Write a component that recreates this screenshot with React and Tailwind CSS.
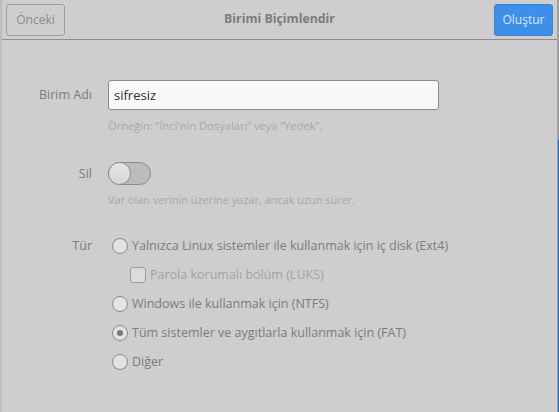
export default function App() {
  const font = { fontFamily: '"Open Sans", "Noto Sans", sans-serif' };
  const Radio = ({ checked }) => (
    <span className="w-[16px] h-[16px] rounded-full border border-[#8a8a8a] bg-[#e2e2e2] flex items-center justify-center shrink-0">
      {checked && <span className="w-[6px] h-[6px] rounded-full bg-[#7a7a7a]" />}
    </span>
  );
  return (
    <div className="w-[559px] h-[412px] bg-[#cecece] relative overflow-hidden text-[12.5px]" style={font}>
      <div className="absolute left-0 top-0 w-[2px] h-[412px] bg-[#bdbdbd]" />
      <div className="absolute right-0 top-0 w-[2px] h-[412px] bg-[#a0a0a0]" />
      <div className="absolute right-0 top-[140px] w-[1px] h-[272px] bg-[#2a6ab0]" />
      <div className="h-[40px] flex items-center justify-between px-[6px] border-b border-[#8f8f8f] rounded-tr-[6px]">
        <button className="w-[59px] h-[32px] rounded-[3px] border border-[#9d9d9d] text-[#8c8c8c] text-[12px]">Önceki</button>
        <div className="font-bold text-[#7c7c7c] text-[12.3px]">Birimi Biçimlendir</div>
        <button className="w-[59px] h-[32px] rounded-[3px] bg-[#3d8fea] border border-[#3a84d8] text-[#dce8f6] text-[12px]">Oluştur</button>
      </div>
      <div className="pt-[40px] grid grid-cols-[92px_1fr] gap-x-[16px]">
        <div className="text-right text-[#7c7c7c] h-[30px] leading-[30px]">Birim Adı</div>
        <div>
          <div className="w-[331px] h-[30px] rounded-[3px] border border-[#8a8a8a] bg-[#f8f8f8] text-[#2e2e2e] text-[13px] leading-[28px] pl-[5px]">sifresiz</div>
          <div className="mt-[8px] text-[11.1px] leading-[16px] text-[#a8a8a8]">Örneğin: “İnci'nin Dosyaları” veya “Yedek”.</div>
        </div>

        <div className="mt-[28px] text-right text-[#7c7c7c] h-[23px] leading-[23px]">Sil</div>
        <div className="mt-[28px]">
          <div className="w-[43px] h-[23px] rounded-full border border-[#8c8c8c] bg-[#bcbcbc] relative">
            <div className="absolute left-[-1px] top-[-1px] w-[23px] h-[23px] rounded-full border border-[#8c8c8c] bg-gradient-to-b from-[#e6e6e6] to-[#d6d6d6]" />
          </div>
          <div className="mt-[7px] text-[10.95px] leading-[16px] text-[#a8a8a8]">Var olan verinin üzerine yazar, ancak uzun sürer.</div>
        </div>

        <div className="mt-[28px] text-right text-[#7c7c7c] h-[20px] leading-[20px]">Tür</div>
        <div className="mt-[28px] flex flex-col gap-[9px] text-[#7c7c7c] pl-[4px]">
          <div className="flex items-center gap-[4px] h-[20px]"><Radio />Yalnızca Linux sistemler ile kullanmak için iç disk (Ext4)</div>
          <div className="flex items-center gap-[4px] h-[20px] pl-[18px] text-[#a3a3a3]">
            <span className="w-[16px] h-[16px] rounded-[3px] border border-[#9a9a9a] bg-[#dcdcdc] shrink-0" />
            Parola korumalı bölüm (LUKS)
          </div>
          <div className="flex items-center gap-[4px] h-[20px]"><Radio />Windows ile kullanmak için (NTFS)</div>
          <div className="flex items-center gap-[4px] h-[20px]"><Radio checked />Tüm sistemler ve aygıtlarla kullanmak için (FAT)</div>
          <div className="flex items-center gap-[4px] h-[20px]"><Radio />Diğer</div>
        </div>
      </div>
    </div>
  );
}
